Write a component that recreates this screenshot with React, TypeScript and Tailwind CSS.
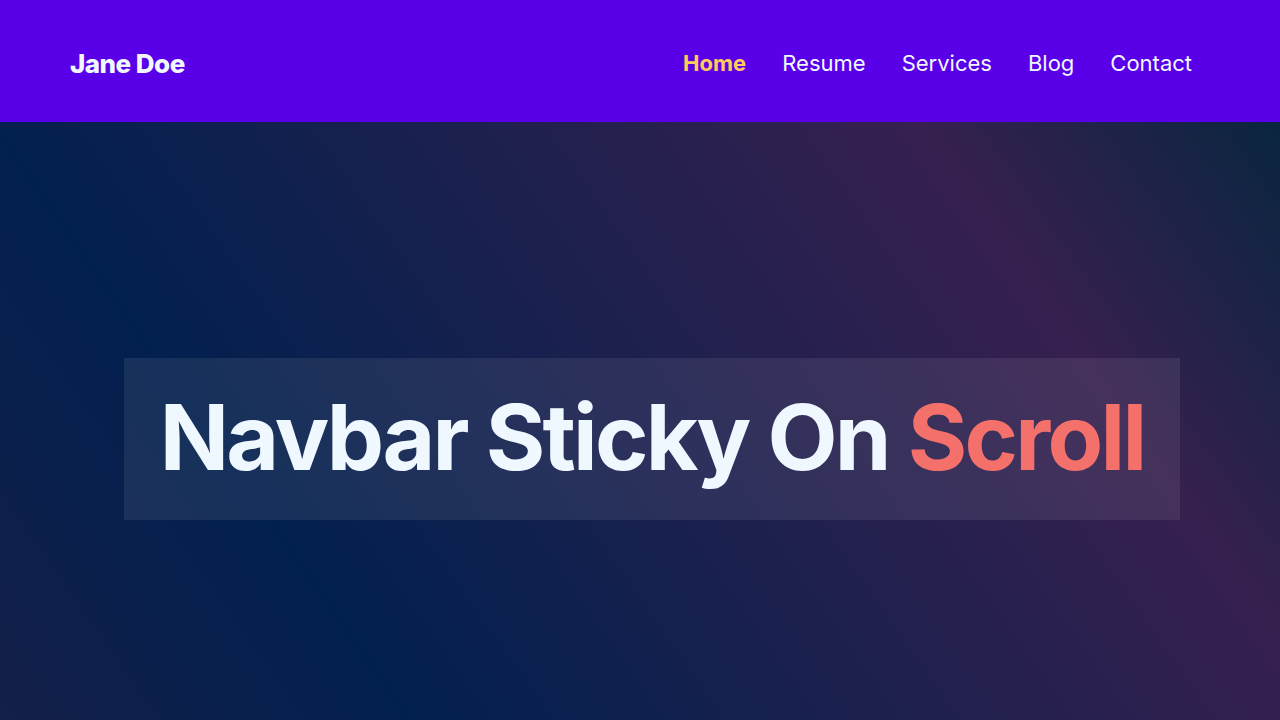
import React from "react";

export default function App() {
  const links = ["Home", "Resume", "Services", "Blog", "Contact"];
  return (
    <div
      className="flex h-screen w-full flex-col bg-[linear-gradient(55deg,#141f4a_0%,#02204e_23%,#36204f_75%,#0a2540_95%)]"
      style={{ fontFamily: "Inter, 'Noto Sans', sans-serif" }}
    >
      <nav className="flex h-[122px] w-full shrink-0 items-center justify-between bg-[#5a00e8] pl-[70px] pr-[88px] pt-[5px]">
        <div className="text-[26px] font-extrabold tracking-[-0.02em] text-[#f0f8ff]">Jane Doe</div>
        <ul className="flex items-center gap-[36px]">
          {links.map((l, i) => (
            <li
              key={l}
              className={
                i === 0
                  ? "text-[22px] font-bold text-[#ffcb5c]"
                  : "text-[22px] font-normal text-[#f0f8ff]"
              }
            >
              {l}
            </li>
          ))}
        </ul>
      </nav>
      <section className="flex flex-1 flex-col pl-[124px] pt-[236px]">
        <div className="flex h-[162px] w-[1056px] items-center justify-center bg-white/[0.08] pb-[4px]">
          <h1 className="text-[91px] font-bold leading-none tracking-[-0.03em] text-[#f0f8ff]">
            Navbar Sticky On <span className="text-[#f4706a]">Scroll</span>
          </h1>
        </div>
      </section>
    </div>
  );
}
